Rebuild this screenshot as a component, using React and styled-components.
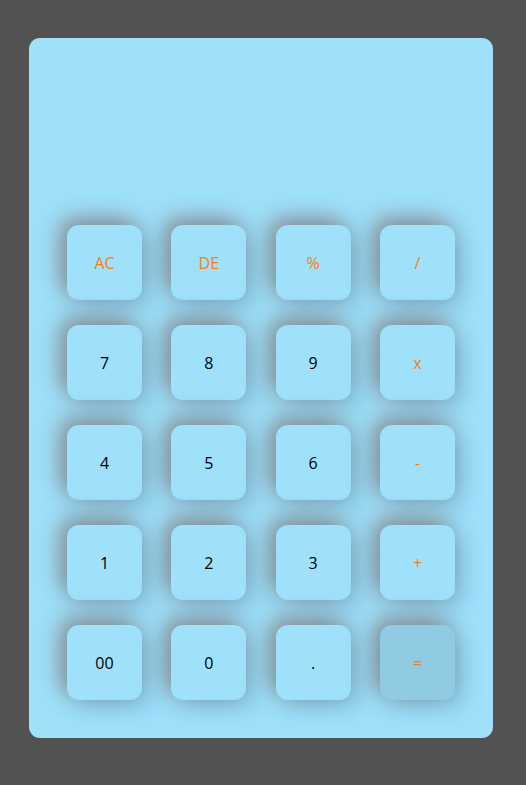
import React from "react";
import styled, { createGlobalStyle } from "styled-components";

const GlobalStyle = createGlobalStyle`
  body {
    margin: 0;
    background: #525252;
    font-family: "Open Sans", "Noto Sans", sans-serif;
  }
`;

const Page = styled.div`
  padding: 38px 33px 47px 29px;
`;

const Calculator = styled.div`
  width: 464px;
  height: 700px;
  box-sizing: border-box;
  background: #9fe0fb;
  border-radius: 11px;
  padding: 0 38px 38px;
  display: flex;
  flex-direction: column;
`;

const Display = styled.div`
  height: 187px;
`;

const Keys = styled.div`
  display: grid;
  grid-template-columns: repeat(4, 75px);
  justify-content: space-between;
  row-gap: 25px;
`;

const Key = styled.button`
  width: 75px;
  height: 75px;
  border: none;
  border-radius: 12px;
  background: ${(p) => (p.$active ? "#90cbe3" : "#9fe0fb")};
  color: ${(p) => (p.$op ? "#f5800f" : "#000")};
  font-family: "Open Sans", "Noto Sans", sans-serif;
  font-size: 16px;
  padding: 0;
  box-shadow: -7px -7px 22px rgba(115, 80, 65, 0.55),
    7px 7px 22px rgba(45, 85, 115, 0.25);
`;

const rows = [
  ["AC", "DE", "%", "/"],
  ["7", "8", "9", "x"],
  ["4", "5", "6", "-"],
  ["1", "2", "3", "+"],
  ["00", "0", ".", "="],
];

const ops = ["AC", "DE", "%", "/", "x", "-", "+", "="];

export default function App() {
  return (
    <>
      <GlobalStyle />
      <Page>
        <Calculator>
          <Display />
          <Keys>
            {rows.flat().map((k) => (
              <Key key={k} $op={ops.includes(k)} $active={k === "="}>
                {k}
              </Key>
            ))}
          </Keys>
        </Calculator>
      </Page>
    </>
  );
}
